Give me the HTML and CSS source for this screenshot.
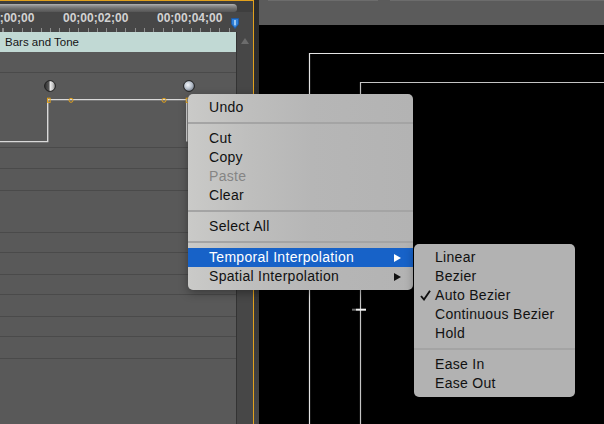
FILE: index.html
```html
<!DOCTYPE html>
<html>
<head>
<meta charset="utf-8">
<title>Timeline context menu</title>
<link rel="stylesheet" href="styles.css">
</head>
<body>
<div class="app">
  <section class="timeline">
    <div class="zoombar"><div class="zoom-thumb"></div></div>
    <div class="ruler">
      <div class="tc-line">
        <span class="tc first">00;00;00;00</span>
        <span class="tc">00;00;02;00</span>
        <span class="tc">00;00;04;00</span>
      </div>
      <div class="ticks"></div>
      <svg class="playhead" width="8" height="11" viewBox="0 0 8 11">
        <path d="M0.5 0.5 H7.5 V6 L4 10.5 L0.5 6 Z" fill="#2f7fd6" stroke="#1d5aa6" stroke-width="1"/>
        <path d="M3 2 H5 V6.5 L4 8 L3 6.5 Z" fill="#9cc8f2"/>
      </svg>
    </div>
    <div class="tl-body">
      <div class="tracks">
        <div class="clip">Bars and Tone</div>
        <div class="row h21"></div>
        <div class="row kf-row">
          <svg class="kf-graph" width="236" height="74" viewBox="0 0 236 74">
            <defs>
              <linearGradient id="ballA" x1="0" y1="0" x2="1" y2="0">
                <stop offset="0" stop-color="#2e2e2e"/>
                <stop offset="0.42" stop-color="#5a5a5a"/>
                <stop offset="0.5" stop-color="#f2f2f2"/>
                <stop offset="0.75" stop-color="#c4c4c4"/>
                <stop offset="1" stop-color="#7c7c7c"/>
              </linearGradient>
              <radialGradient id="ballB" cx="0.4" cy="0.4" r="0.65">
                <stop offset="0" stop-color="#f4f7fb"/>
                <stop offset="0.55" stop-color="#b7c0cc"/>
                <stop offset="1" stop-color="#6d7480"/>
              </radialGradient>
            </defs>
            <circle cx="50" cy="13" r="5.4" fill="url(#ballA)" stroke="#1e1e1e" stroke-width="1"/>
            <circle cx="189" cy="13" r="5.4" fill="url(#ballB)" stroke="#1e1e1e" stroke-width="1"/>
            <path d="M0 68.6 H47.7 V26.6 H186.7 V68.6" fill="none" stroke="#d9d9d9" stroke-width="1.4"/>
            <rect x="47.5" y="25.2" width="2.6" height="4.2" fill="none" stroke="#e3a21a" stroke-width="1"/>
            <circle cx="71" cy="27.3" r="2" fill="none" stroke="#e3a21a" stroke-width="1"/>
            <circle cx="164" cy="27.3" r="2" fill="none" stroke="#e3a21a" stroke-width="1"/>
            <rect x="186.2" y="25.2" width="2.6" height="4.2" fill="none" stroke="#e3a21a" stroke-width="1"/>
          </svg>
        </div>
        <div class="row h21"></div>
        <div class="row h22"></div>
        <div class="row h42"></div>
        <div class="row h20"></div>
        <div class="row h22"></div>
        <div class="row h20"></div>
        <div class="row h22"></div>
        <div class="row h20"></div>
        <div class="row h22"></div>
        <div class="row last"></div>
      </div>
      <div class="vscroll"><span class="up-arrow"></span></div>
    </div>
  </section>
  <div class="divider"></div>
  <section class="monitor">
    <div class="mon-bar">
      <span class="tab-edge a"></span>
      <span class="tab-edge b"></span>
    </div>
    <div class="mon-canvas">
      <svg width="345" height="399" viewBox="0 0 345 399">
        <path d="M50.5 400 V28.5 H346" fill="none" stroke="#e4e4e4" stroke-width="1.2"/>
        <path d="M101.5 400 V57.5 H346" fill="none" stroke="#c4c4c4" stroke-width="1.2"/>
        <rect x="93" y="283.7" width="4" height="2" fill="#6a6a6a"/>
        <rect x="97" y="283.7" width="10" height="2" fill="#f0f0f0"/>
      </svg>
    </div>
  </section>
</div>

<div class="menu ctx">
  <div class="item">Undo</div>
  <div class="sep"></div>
  <div class="item">Cut</div>
  <div class="item">Copy</div>
  <div class="item disabled">Paste</div>
  <div class="item">Clear</div>
  <div class="sep"></div>
  <div class="item">Select All</div>
  <div class="sep"></div>
  <div class="item active has-sub"><span class="label">Temporal Interpolation</span><span class="arrow"></span></div>
  <div class="item has-sub"><span class="label">Spatial Interpolation</span><span class="arrow"></span></div>
</div>

<div class="menu sub">
  <div class="item"><span class="chk"></span>Linear</div>
  <div class="item"><span class="chk"></span>Bezier</div>
  <div class="item"><span class="chk"><svg width="11" height="11" viewBox="0 0 11 11"><path d="M1 6 L4 9.5 L10 0.8" fill="none" stroke="#111" stroke-width="1.9"/></svg></span>Auto Bezier</div>
  <div class="item"><span class="chk"></span>Continuous Bezier</div>
  <div class="item"><span class="chk"></span>Hold</div>
  <div class="sep"></div>
  <div class="item"><span class="chk"></span>Ease In</div>
  <div class="item"><span class="chk"></span>Ease Out</div>
</div>
</body>
</html>
```

FILE: styles.css
```css
* { box-sizing: border-box; }

html, body {
  margin: 0;
  padding: 0;
  width: 604px;
  height: 424px;
  overflow: hidden;
  background: #000;
  font-family: "Liberation Sans", Arial, sans-serif;
}

.app {
  display: flex;
  width: 604px;
  height: 424px;
}

/* ---------- timeline panel ---------- */
.timeline {
  width: 254px;
  height: 424px;
  display: flex;
  flex-direction: column;
  border-top: 1px solid #e2a11d;
  border-right: 1px solid #e2a11d;
  background: #464646;
}

.zoombar {
  height: 11px;
  padding-top: 3px;
  background: #3e3e3e;
  overflow: hidden;
}

.zoom-thumb {
  width: 247px;
  height: 8px;
  margin-left: -10px;
  border-radius: 4px 4px 3px 3px;
  background: linear-gradient(to bottom, #b4b4b4 0%, #8c8c8c 25%, #6c6c6c 60%, #565656 100%);
}

.ruler {
  position: relative;
  height: 20px;
  background: #474747;
  overflow: hidden;
}

.tc-line {
  display: flex;
  gap: 29px;
  height: 16px;
  margin-left: -31px;
  line-height: 12px;
  font-size: 12px;
  font-weight: bold;
  color: #d2d2d2;
  white-space: nowrap;
}

.tc {
  display: inline-block;
  width: 65px;
}

.ticks {
  height: 4px;
  margin-right: 17px;
  background: repeating-linear-gradient(90deg, #8e8e8e 0 1px, transparent 1px 9.4px);
  background-position: 3px 0;
}

.playhead {
  position: absolute;
  left: 231px;
  top: 6px;
}

.tl-body {
  flex: 1;
  display: flex;
}

.tracks {
  width: 237px;
  display: flex;
  flex-direction: column;
  background: #595959;
  border-right: 1px solid #333;
}

.clip {
  height: 20px;
  background: #c1d9d4;
  color: #141414;
  font-size: 11.5px;
  line-height: 21px;
  padding-left: 5px;
}

.row {
  border-bottom: 1px solid #4a4a4a;
}
.h20 { height: 20px; }
.h21 { height: 21px; }
.h22 { height: 22px; }
.h42 { height: 42px; }
.kf-row { height: 75px; }
.row.last { flex: 1; border-bottom: none; }
.kf-graph { display: block; }

.vscroll {
  width: 16px;
  background: #474747;
  display: flex;
  justify-content: center;
  padding-top: 6px;
}

.up-arrow {
  width: 0;
  height: 0;
  border-left: 4px solid transparent;
  border-right: 4px solid transparent;
  border-bottom: 6px solid #6c6c6c;
}

/* ---------- divider ---------- */
.divider {
  width: 5px;
  height: 424px;
  background: linear-gradient(to bottom, #2c2c2c 0%, #303030 60%, #474747 100%);
}

/* ---------- monitor ---------- */
.monitor {
  flex: 1;
  display: flex;
  flex-direction: column;
}

.mon-bar {
  height: 25px;
  background: #5b5b5b;
  display: flex;
  align-items: flex-start;
  padding-left: 9px;
  gap: 12px;
}

.tab-edge {
  height: 1px;
  background: #6c6c6c;
}
.tab-edge.a { width: 110px; }
.tab-edge.b { flex: 1; }

.mon-canvas {
  flex: 1;
  background: #000;
  overflow: hidden;
}
.mon-canvas svg { display: block; }

/* ---------- menus ---------- */
.menu {
  position: absolute;
  border-radius: 5px;
  font-size: 14px;
  letter-spacing: 0.3px;
  color: #111;
  box-shadow: 0 3px 10px rgba(0, 0, 0, 0.35);
}

.ctx {
  left: 188px;
  top: 94px;
  width: 225px;
  padding: 4px 0 4px;
  background: linear-gradient(90deg, #cacac8 0%, #bebebd 28%, #b6b6b6 55%, #b3b3b3 100%);
}

.sub {
  left: 414px;
  top: 244px;
  width: 161px;
  padding: 4px 0 4px;
  background: #b2b2b2;
}

.item {
  height: 19px;
  line-height: 19px;
  padding-left: 21px;
  white-space: nowrap;
}

.sub .item {
  display: flex;
  align-items: center;
  padding-left: 6px;
}

.chk {
  width: 15px;
  height: 19px;
  display: flex;
  align-items: center;
}

.item.disabled { color: #858585; }

.item.has-sub {
  display: flex;
  align-items: center;
  justify-content: space-between;
  padding-right: 12px;
}

.item.active {
  background: #1762c8;
  color: #fff;
}

.arrow {
  width: 0;
  height: 0;
  border-top: 4px solid transparent;
  border-bottom: 4px solid transparent;
  border-left: 7px solid #111;
}
.item.active .arrow { border-left-color: #fff; }

.sep {
  height: 12px;
  display: flex;
  align-items: center;
}
.sep::before {
  content: "";
  display: block;
  width: 100%;
  height: 2px;
  background: #a4a4a4;
}
```
